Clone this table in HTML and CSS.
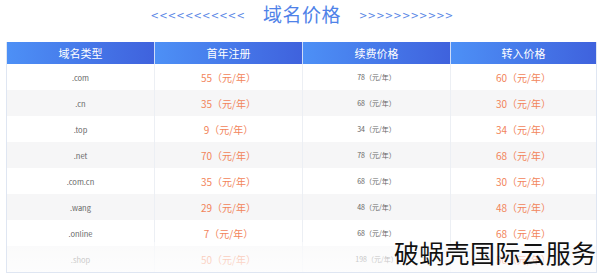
FILE: index.html
```html
<!DOCTYPE html>
<html><head><meta charset="utf-8"><link rel="stylesheet" href="styles.css"></head>
<body>
<div class="page">
  <div class="title">
    <span class="arrows">&lt;&lt;&lt;&lt;&lt;&lt;&lt;&lt;&lt;&lt;&lt;</span>
    <span class="name">域名价格</span>
    <span class="arrows">&gt;&gt;&gt;&gt;&gt;&gt;&gt;&gt;&gt;&gt;&gt;</span>
  </div>
  <div class="table">
    <div class="row head"><div>域名类型</div><div>首年注册</div><div>续费价格</div><div>转入价格</div></div>
    <div class="row"><div class="d">.com</div><div class="p">55（元/年）</div><div class="r">78（元/年）</div><div class="p">60（元/年）</div></div>
    <div class="row alt"><div class="d">.cn</div><div class="p">35（元/年）</div><div class="r">68（元/年）</div><div class="p">30（元/年）</div></div>
    <div class="row"><div class="d">.top</div><div class="p">9（元/年）</div><div class="r">34（元/年）</div><div class="p">34（元/年）</div></div>
    <div class="row alt"><div class="d">.net</div><div class="p">70（元/年）</div><div class="r">78（元/年）</div><div class="p">68（元/年）</div></div>
    <div class="row"><div class="d">.com.cn</div><div class="p">35（元/年）</div><div class="r">68（元/年）</div><div class="p">30（元/年）</div></div>
    <div class="row alt"><div class="d">.wang</div><div class="p">29（元/年）</div><div class="r">48（元/年）</div><div class="p">48（元/年）</div></div>
    <div class="row"><div class="d">.online</div><div class="p">7（元/年）</div><div class="r">68（元/年）</div><div class="p">68（元/年）</div></div>
    <div class="row alt"><div class="d">.shop</div><div class="p">50（元/年）</div><div class="r">198（元/年）</div><div class="p">50（元/年）</div></div>
    <div class="fade"></div>
  </div>
  <div class="mark">破蜗壳国际云服务</div>
</div>
</body></html>
```
FILE: styles.css
```css
* { box-sizing: border-box; }
html, body { margin: 0; padding: 0; background: #fff; }
body { width: 600px; height: 274px; overflow: hidden; font-family: "Noto Sans CJK SC", "Noto Sans", sans-serif; }
.page { position: relative; width: 600px; height: 274px; padding-top: 1px; }
.title { display: flex; justify-content: center; align-items: center; gap: 18px; height: 26px; padding-left: 4px; }
.arrows { color: #5a87e6; font-family: "DejaVu Sans", sans-serif; font-size: 10px; letter-spacing: 0.2px; padding-top: 2px; }
.name { color: #4f82e8; font-size: 19px; line-height: 26px; letter-spacing: 0.5px; }
.table { position: relative; margin: 15px 3px 0 6px; border: 1px solid #dfe6f2; border-top: none; }
.row { display: grid; grid-template-columns: 148px 148px 148px 1fr; height: 26px; align-items: center; text-align: center; }
.row > div { height: 100%; display: flex; align-items: center; justify-content: center; border-right: 1px solid #eceff4; }
.row > div:last-child { border-right: none; }
.row.alt { background: #f6f6f7; }
.head { height: 22px; }
.head > div { color: #fff; font-size: 11px; border-right: 1px solid #cfdcf8; background: linear-gradient(90deg, #4d90f6, #3f62dd); }
.d { color: #666; font-size: 7.5px; }
.r { color: #666; font-size: 7px; }
.p { color: #f2845a; font-size: 10px; }
.fade { position: absolute; left: 0; right: 0; bottom: 0; height: 30px; background: linear-gradient(180deg, rgba(255,255,255,0.45), rgba(255,255,255,0.75)); }
.mark { position: absolute; left: 394px; top: 236px; font-size: 25px; color: #111; line-height: 32px; letter-spacing: 0.3px; }
```
